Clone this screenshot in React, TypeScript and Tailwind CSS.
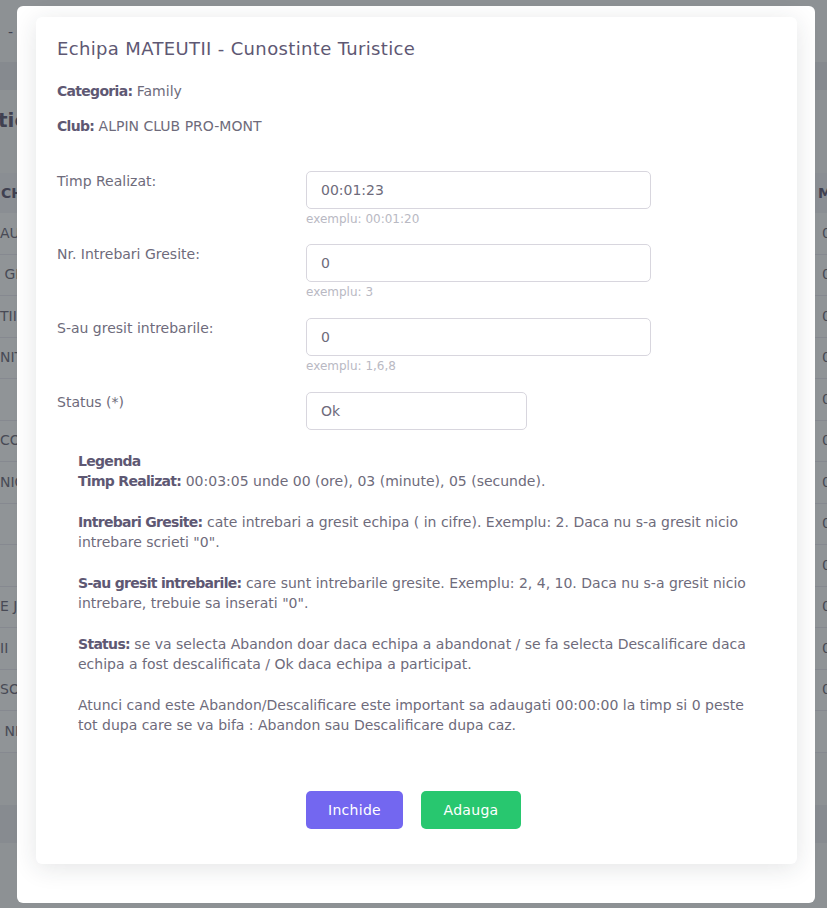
import React from "react";

const FONT = "font-['DejaVu_Sans',sans-serif]";
const BOLD = "font-semibold text-[#5e5873] tracking-[-0.7px]";

const ROWS_LEFT = ["AURORA", " GIGANT", "TII", "NITA", "", "COLIBRI", "NICOARA", "", "", "E JOS", "II", "SOLO", " NIVEL"];
const ROWS_RIGHT = ["0", "0", "0", "0", "0", "0", "0", "0", "0", "0", "0", "0", ""];

const FIELDS = [
  { label: "Timp Realizat:", value: "00:01:23", hint: "exemplu: 00:01:20", mb: "mb-[16px]" },
  { label: "Nr. Intrebari Gresite:", value: "0", hint: "exemplu: 3", mb: "mb-[17px]" },
  { label: "S-au gresit intrebarile:", value: "0", hint: "exemplu: 1,6,8", mb: "mb-[17px]" },
];

function BackgroundPage() {
  return (
    <div className="w-full h-full bg-[#f8f8f8] text-[14px] text-[#6e6b7b]">
      <div className="h-[62px] flex items-center pl-[8px] pt-[2px] text-[#5e5873]">-</div>
      <div className="h-[28px] bg-[#ebebee]" />
      <div className="h-[60px] flex items-center text-[20px] font-semibold text-[#5e5873] -ml-[2px]">tica</div>
      <div className="bg-white">
        <div className="h-[40px] mt-[23px] bg-[#f3f2f7] flex items-center justify-between uppercase text-[#5e5873] font-semibold">
          <span className="pl-[1px]">CHIPA</span>
          <span className="w-[9px] overflow-hidden">M</span>
        </div>
        {ROWS_LEFT.map((name, i) => (
          <div key={i} className="h-[41.5px] border-b border-[#ebe9f1] flex items-center justify-between">
            <span className="whitespace-pre">{name}</span>
            <span className="w-[5px] overflow-hidden">{ROWS_RIGHT[i]}</span>
          </div>
        ))}
      </div>
      <div className="h-[52px]" />
      <div className="h-[38px] bg-[#ededf0]" />
    </div>
  );
}

export default function App() {
  return (
    <div className={`relative w-[827px] h-[908px] overflow-hidden ${FONT}`}>
      <BackgroundPage />
      <div className="absolute inset-0 bg-[#22292f]/50" />

      <div className="absolute inset-0 pl-[17px] pt-[6px]">
        <div className="w-[798px] h-[897px] rounded-[6px] bg-white pt-[11px] pl-[19px] pr-[18px] pb-[39px]">
          <div className="w-[761px] h-[847px] rounded-[6px] bg-white shadow-[0_4px_24px_0_rgba(34,41,47,0.12)] p-[21px] text-[14px] text-[#6e6b7b]">
            <h4 className="text-[18px] font-medium leading-[22px] tracking-[0.35px] text-[#5e5873] mb-[21px]">
              Echipa MATEUTII - Cunostinte Turistice
            </h4>
            <p className="leading-[20px] mb-[15px]">
              <b className={BOLD}>Categoria:</b> Family
            </p>
            <p className="leading-[20px] mb-[35px]">
              <b className={BOLD}>Club:</b> ALPIN CLUB PRO-MONT
            </p>

            {FIELDS.map((f) => (
              <div key={f.label} className={`flex ${f.mb}`}>
                <label className="w-[249px] leading-[20px]">{f.label}</label>
                <div>
                  <div className="w-[345px] h-[38px] border border-[#d8d6de] rounded-[5px] px-[14px] flex items-center">
                    {f.value}
                  </div>
                  <div className="mt-[1px] text-[12px] leading-[18px] text-[#b9b9c3]">{f.hint}</div>
                </div>
              </div>
            ))}

            <div className="flex">
              <label className="w-[249px] leading-[20px]">Status (*)</label>
              <div className="w-[221px] h-[38px] border border-[#d8d6de] rounded-[5px] px-[14px] flex items-center">
                Ok
              </div>
            </div>

            <div className="mt-[21px] px-[21px] leading-[20.3px] whitespace-nowrap">
              <b className={BOLD}>Legenda</b>
              <br />
              <b className={BOLD}>Timp Realizat:</b> 00:03:05 unde 00 (ore), 03 (minute), 05 (secunde).
              <br />
              <br />
              <b className={BOLD}>Intrebari Gresite:</b> cate intrebari a gresit echipa ( in cifre). Exemplu: 2. Daca nu s-a gresit nicio
              <br />
              intrebare scrieti "0".
              <br />
              <br />
              <b className={BOLD}>S-au gresit intrebarile:</b> care sunt intrebarile gresite. Exemplu: 2, 4, 10. Daca nu s-a gresit nicio
              <br />
              intrebare, trebuie sa inserati "0".
              <br />
              <br />
              <b className={BOLD}>Status:</b> se va selecta Abandon doar daca echipa a abandonat / se fa selecta Descalificare daca
              <br />
              echipa a fost descalificata / Ok daca echipa a participat.
              <br />
              <br />
              Atunci cand este Abandon/Descalificare este important sa adaugati 00:00:00 la timp si 0 peste
              <br />
              tot dupa care se va bifa : Abandon sau Descalificare dupa caz.
            </div>

            <div className="ml-[249px] mt-[56px] flex gap-[18px]">
              <button className="w-[97px] h-[38px] rounded-[5px] bg-[#7367f0] text-white text-[14px] font-medium tracking-[0.3px]">
                Inchide
              </button>
              <button className="w-[100px] h-[38px] rounded-[5px] bg-[#28c76f] text-white text-[14px] font-medium tracking-[0.3px]">
                Adauga
              </button>
            </div>
          </div>
        </div>
      </div>
    </div>
  );
}
